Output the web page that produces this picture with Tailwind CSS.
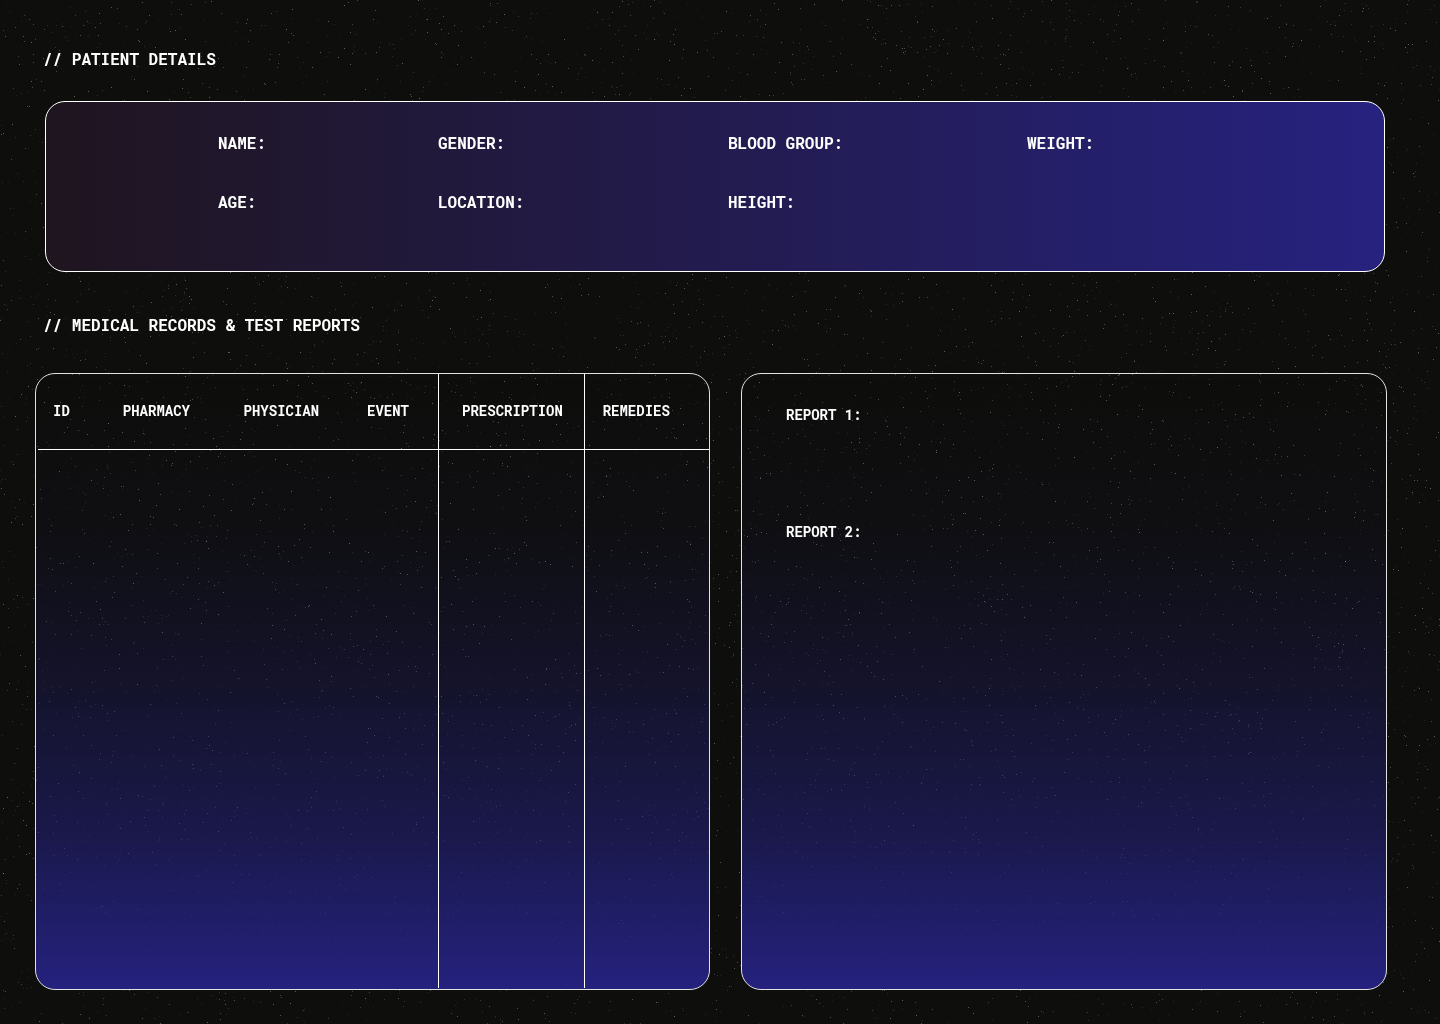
<!DOCTYPE html>
<html lang="en">
<head>
<meta charset="utf-8">
<meta name="viewport" content="width=device-width, initial-scale=1">
<title>Patient Details</title>
<script src="https://cdn.jsdelivr.net/npm/@tailwindcss/browser@4"></script>
</head>
<body class="relative min-h-screen bg-[#0e0e0c] font-['Roboto_Mono','DejaVu_Sans_Mono',monospace] font-bold text-white">
<canvas id="grain" class="pointer-events-none absolute inset-0 size-full" aria-hidden="true"></canvas>
<main class="relative flex min-h-screen flex-col pt-[47px] pr-[53px] pb-[34px] pl-[35px] text-base leading-6">
  <h1 class="ml-2 font-bold">// PATIENT DETAILS</h1>
  <dl class="mt-[30px] mr-0.5 ml-2.5 grid grid-cols-[220fr_290fr_299fr_357fr] gap-y-[35px] rounded-[20px] border border-white bg-linear-to-r/srgb from-[#1f151f] to-[#26227f] pt-[29px] pb-[57px] pl-[172px]">
    <div><dt>NAME:</dt><dd></dd></div>
    <div><dt>GENDER:</dt><dd></dd></div>
    <div><dt>BLOOD GROUP:</dt><dd></dd></div>
    <div><dt>WEIGHT:</dt><dd></dd></div>
    <div><dt>AGE:</dt><dd></dd></div>
    <div><dt>LOCATION:</dt><dd></dd></div>
    <div><dt>HEIGHT:</dt><dd></dd></div>
  </dl>
  <h2 class="mt-[41px] ml-2 font-bold">// MEDICAL RECORDS &amp; TEST REPORTS</h2>
  <div class="mt-9 grid grow grid-cols-[675fr_646fr] gap-[31px] text-sm leading-5">
    <section class="flex rounded-[20px] border border-[#e2e2e2] bg-[linear-gradient(#25227f00,#25227f0f_25%,#25227f44_50%,#25227f8c_75%,#25227f)] pb-px pl-0.5" aria-label="Medical records">
      <table class="w-full table-fixed border-collapse text-left">
        <colgroup>
          <col class="w-[10.4%]"><col class="w-[18%]"><col class="w-[18.4%]"><col class="w-[12.9%]"><col class="w-[21.7%]"><col>
        </colgroup>
        <thead>
          <tr class="h-[75px] border-b border-white">
            <th class="pl-[15px]">ID</th>
            <th class="pl-[15px]">PHARMACY</th>
            <th class="pl-[15px]">PHYSICIAN</th>
            <th class="border-r border-white pl-[15px]">EVENT</th>
            <th class="border-r border-white pl-[23px]">PRESCRIPTION</th>
            <th class="pl-[18px]">REMEDIES</th>
          </tr>
        </thead>
        <tbody>
          <tr><td></td><td></td><td></td><td class="border-r border-white"></td><td class="border-r border-white"></td><td></td></tr>
        </tbody>
      </table>
    </section>
    <section class="flex flex-col gap-[97px] rounded-[20px] border border-[#e2e2e2] bg-[linear-gradient(#25227f00,#25227f0f_25%,#25227f44_50%,#25227f8c_75%,#25227f)] pt-[31px] pl-11" aria-label="Test reports">
      <h3 class="font-bold">REPORT 1:</h3>
      <h3 class="font-bold">REPORT 2:</h3>
    </section>
  </div>
</main>
<script>
  // Sparse single-pixel grain over the page background
  const canvas = document.getElementById('grain');
  function drawGrain() {
    const w = canvas.width = document.documentElement.clientWidth;
    const h = canvas.height = Math.max(innerHeight, document.body.offsetHeight);
    const ctx = canvas.getContext('2d');
    let seed = 7;
    const random = () => (seed = (seed * 16807) % 2147483647) / 2147483647;
    for (let i = 0; i < w * h * 0.009; i++) {
      ctx.fillStyle = `rgba(255,255,255,${0.02 + 0.34 * random() ** 2})`;
      ctx.fillRect(Math.floor(random() * w), Math.floor(random() * h), 1, 1);
    }
  }
  drawGrain();
  addEventListener('load', drawGrain);
  addEventListener('resize', drawGrain);
</script>
</body>
</html>
